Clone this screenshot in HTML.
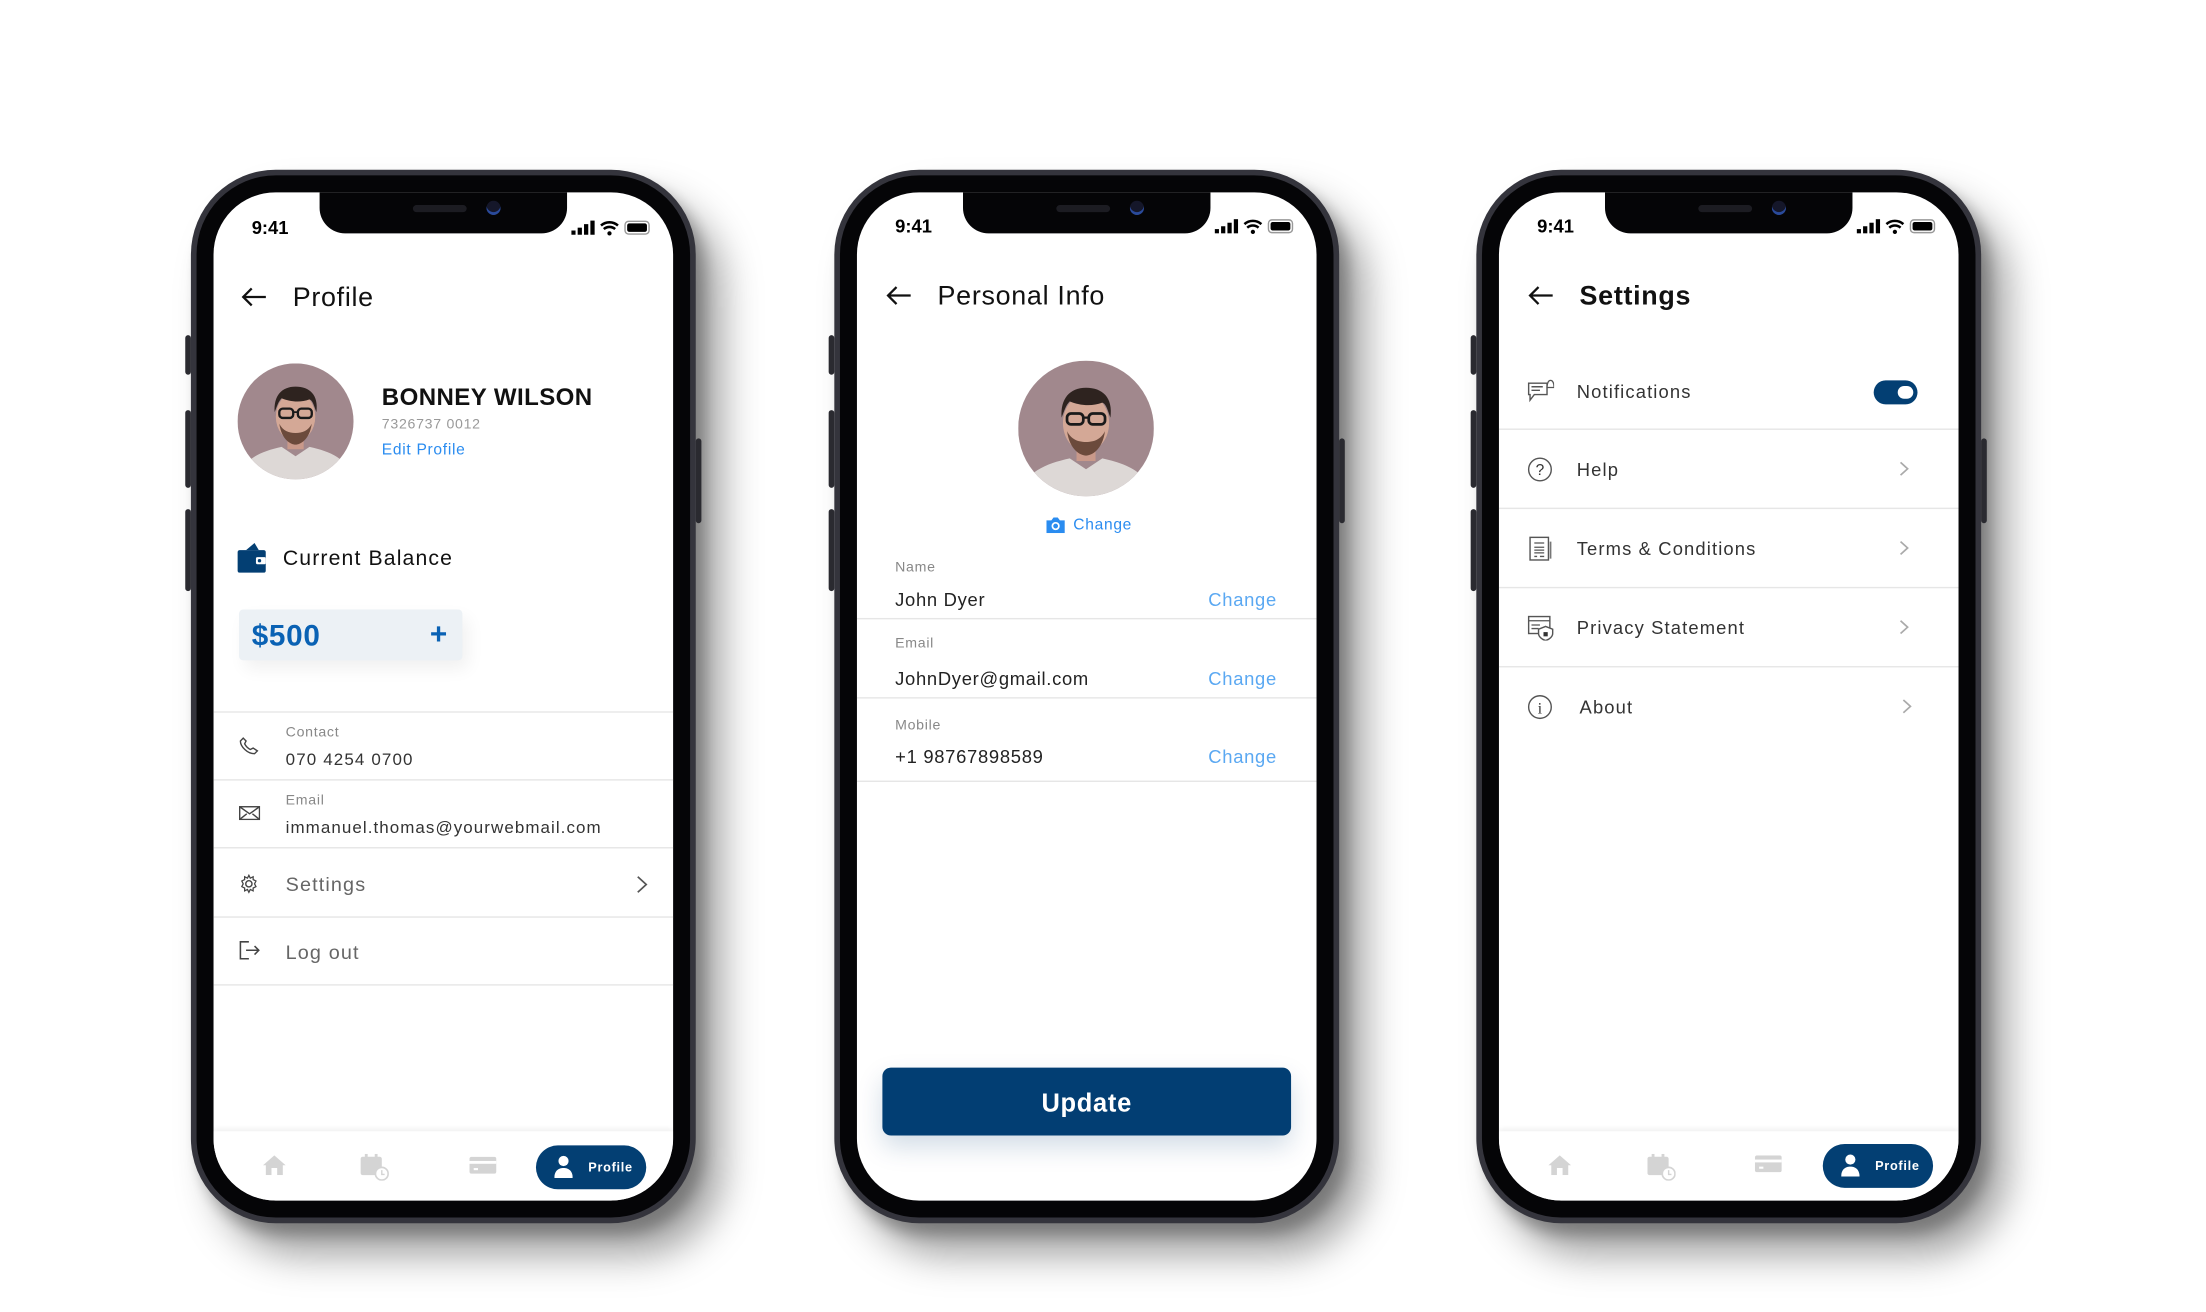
<!DOCTYPE html>
<html><head><meta charset="utf-8"><style>
*{margin:0;padding:0;box-sizing:border-box}
html,body{width:2206px;height:1312px;overflow:hidden;background:#fff;font-family:"Liberation Sans",sans-serif}
#w{position:absolute;left:0;top:0;width:1560px;height:928px;transform:scale(1.41410);transform-origin:0 0}
.ph{position:absolute;top:120px;width:357px;height:745px;border-radius:60px;background:#34343c;box-shadow:18px 22px 28px rgba(0,0,0,.38),6px 8px 10px rgba(0,0,0,.25)}
.bz{position:absolute;left:4px;top:4px;right:4px;bottom:4px;border-radius:56px;background:#050507}
.sc{position:absolute;left:16px;top:16px;width:325px;height:713px;border-radius:44px;background:#fff;overflow:hidden}
.btn{position:absolute;background:#2a2a30;border-radius:2px}
.notch{position:absolute;left:75px;top:0;width:175px;height:29px;background:#050507;border-radius:0 0 18px 18px}
.notch:before{content:"";position:absolute;left:66px;top:9px;width:38px;height:5px;border-radius:3px;background:#1c1c22}
.notch:after{content:"";position:absolute;left:118px;top:6px;width:10px;height:10px;border-radius:50%;background:#15172a;box-shadow:inset 0 -2px 0 #2a4a9a}
.t{position:absolute;white-space:nowrap;transform:translateY(-50%);line-height:1;letter-spacing:.5px}
.time{left:27px;top:25px;font-weight:bold;font-size:13px;color:#000;letter-spacing:0}
.stat{position:absolute;right:14px;top:19px}
.dv{position:absolute;left:0;width:325px;height:1px;background:#e6e6e6}
.gl{font-size:10px;color:#888}
.nav{position:absolute;left:0;top:664px;width:325px;height:49px;background:#fff;box-shadow:0 -2px 3px rgba(0,0,0,.05)}
.pill{position:absolute;left:228px;top:10px;width:78px;height:31px;border-radius:16px;background:#033f73;color:#fff;font-size:9px;font-weight:bold}
.blue{color:#2a8cf0}
</style></head><body><div id="w">

<!-- PHONE 1 -->
<div class="ph" style="left:135px">
 <div class="btn" style="left:-4px;top:117px;width:4px;height:28px"></div>
 <div class="btn" style="left:-4px;top:170px;width:4px;height:55px"></div>
 <div class="btn" style="left:-4px;top:240px;width:4px;height:58px"></div>
 <div class="btn" style="right:-4px;top:190px;width:4px;height:60px"></div>
 <div class="bz"></div>
 <div class="sc">
  <div class="notch"></div>
  <div class="t time">9:41</div>
  <svg class="stat" width="58" height="12" viewBox="0 0 58 12"><rect x="0" y="8" width="3" height="3" fill="#000"/><rect x="4.5" y="6" width="3" height="5" fill="#000"/><rect x="9" y="3.5" width="3" height="7.5" fill="#000"/><rect x="13.5" y="1" width="3" height="10" fill="#000"/><path d="M21 4.5a9 9 0 0 1 12 0M23 7a6 6 0 0 1 8 0" stroke="#000" stroke-width="1.8" fill="none"/><circle cx="27" cy="10" r="1.5"/><rect x="38" y="1.5" width="17" height="9" rx="2.5" fill="none" stroke="#999" stroke-width="1"/><rect x="39.5" y="3" width="14" height="6" rx="1.5" fill="#000"/></svg>
  <svg style="position:absolute;left:19px;top:67px" width="19" height="14" viewBox="0 0 19 14"><path d="M18 7H2M8 1L2 7l6 6" stroke="#111" stroke-width="1.6" fill="none"/></svg>
  <div class="t" style="left:56px;top:75px;font-size:19px;color:#111">Profile</div>
  <svg style="position:absolute;left:17px;top:121px" width="82" height="82" viewBox="0 0 100 100"><defs><clipPath id="c1"><circle cx="50" cy="50" r="50"/></clipPath></defs><g clip-path="url(#c1)"><rect width="100" height="100" fill="#a1888d"/><path d="M0 100C5 82 20 76 38 72L50 80 62 72C80 76 95 82 100 100Z" fill="#ddd8d6"/><rect x="43" y="60" width="14" height="14" fill="#c9998a"/><ellipse cx="50" cy="46" rx="17" ry="21" fill="#d4a896"/><path d="M36 52c2 14 10 18 14 18s12-4 14-18c-3 6-8 8-14 8s-11-2-14-8z" fill="#6b4a3c"/><path d="M32 42c-1-14 6-22 18-22s20 7 18 22c-2-5-3-10-6-11-8 3-17 2-24-1-3 3-4 7-6 12z" fill="#2e231f"/><rect x="36" y="39" width="12" height="8" rx="3" fill="none" stroke="#1a1a1a" stroke-width="2"/><rect x="52" y="39" width="12" height="8" rx="3" fill="none" stroke="#1a1a1a" stroke-width="2"/><path d="M48 42h4" stroke="#1a1a1a" stroke-width="1.6"/></g></svg>
  <div class="t" style="left:119px;top:145px;font-size:17px;font-weight:bold;color:#111;letter-spacing:.3px">BONNEY WILSON</div>
  <div class="t" style="left:119px;top:165px;font-size:10px;color:#999">7326737 0012</div>
  <div class="t" style="left:119px;top:183px;font-size:11px;color:#2a8cf0">Edit Profile</div>
  <svg style="position:absolute;left:17px;top:248px" width="20" height="21" viewBox="0 0 20 21"><path d="M6 5L12 0l3 5z" fill="#033f73"/><rect x="0" y="5" width="20" height="16" rx="1.5" fill="#033f73"/><rect x="13" y="10" width="7" height="5" rx="1" fill="#fff"/><circle cx="15.5" cy="12.5" r="1.2" fill="#033f73"/></svg>
  <div class="t" style="left:49px;top:259px;font-size:15px;color:#111;letter-spacing:.8px">Current Balance</div>
  <div style="position:absolute;left:18px;top:295px;width:158px;height:36px;background:#ecf1f5;border-radius:3px;box-shadow:4px 6px 12px rgba(0,0,0,.06)"></div>
  <div class="t" style="left:27px;top:314px;font-size:21px;font-weight:bold;color:#0a62b4">$500</div>
  <div class="t" style="left:153px;top:313px;font-size:21px;font-weight:bold;color:#0a62b4">+</div>
  <div class="dv" style="top:367px"></div>
  <svg style="position:absolute;left:18px;top:385px" width="15" height="13" viewBox="0 0 15 13"><path d="M3 1L1 3c0 4 5 9 10 9l2-2-3-2-2 1C6 8 5 7 4 5l1-2z" fill="none" stroke="#444" stroke-width="1"/></svg>
  <div class="t gl" style="left:51px;top:383px">Contact</div>
  <div class="t" style="left:51px;top:401px;font-size:12px;color:#333;letter-spacing:.8px">070 4254 0700</div>
  <div class="dv" style="top:415px"></div>
  <svg style="position:absolute;left:18px;top:434px" width="15" height="10" viewBox="0 0 15 10"><rect x=".5" y=".5" width="14" height="9" fill="none" stroke="#444"/><path d="M.5.5l7 5 7-5M.5 9.5l5-4M14.5 9.5l-5-4" fill="none" stroke="#444"/></svg>
  <div class="t gl" style="left:51px;top:431px">Email</div>
  <div class="t" style="left:51px;top:449px;font-size:12px;color:#333;letter-spacing:.75px">immanuel.thomas@yourwebmail.com</div>
  <div class="dv" style="top:463px"></div>
  <svg style="position:absolute;left:18px;top:482px" width="14" height="14" viewBox="0 0 14 14"><circle cx="7" cy="7" r="2.2" fill="none" stroke="#444"/><path d="M7 1l1 2 2-1 0 2 2 1-1 2 1 2-2 1 0 2-2-1-1 2-1-2-2 1 0-2-2-1 1-2-1-2 2-1 0-2 2 1z" fill="none" stroke="#444" stroke-width=".9"/></svg>
  <div class="t" style="left:51px;top:489px;font-size:14px;color:#666;letter-spacing:.8px">Settings</div>
  <svg style="position:absolute;left:299px;top:483px" width="8" height="13" viewBox="0 0 8 13"><path d="M1 1l6 5.5L1 12" fill="none" stroke="#555" stroke-width="1.2"/></svg>
  <div class="dv" style="top:512px"></div>
  <svg style="position:absolute;left:18px;top:529px" width="15" height="14" viewBox="0 0 15 14"><path d="M7 1H1v12h6M5 7h9M11 4l3 3-3 3" fill="none" stroke="#444" stroke-width="1.1"/></svg>
  <div class="t" style="left:51px;top:537px;font-size:14px;color:#666;letter-spacing:.8px">Log out</div>
  <div class="dv" style="top:560px"></div>
  <div class="nav">
   <svg style="position:absolute;left:35px;top:17px" width="16" height="14" viewBox="0 0 16 14"><path d="M8 0L0 7h2v7h4V9h4v5h4V7h2z" fill="#d4d4d4"/></svg>
   <svg style="position:absolute;left:104px;top:16px" width="20" height="19" viewBox="0 0 20 19"><rect x="0" y="2" width="15" height="13" rx="1.5" fill="#d4d4d4"/><rect x="3" y="0" width="2" height="4" fill="#d4d4d4"/><rect x="10" y="0" width="2" height="4" fill="#d4d4d4"/><circle cx="15" cy="14" r="4.5" fill="#fff" stroke="#d4d4d4" stroke-width="1.2"/><path d="M15 11.5v3h2" stroke="#d4d4d4" fill="none"/></svg>
   <svg style="position:absolute;left:181px;top:18px" width="19" height="12" viewBox="0 0 19 12"><rect width="19" height="12" rx="1.5" fill="#d4d4d4"/><rect y="3" width="19" height="2" fill="#fff"/><rect x="3" y="8" width="3" height="1.5" fill="#fff"/></svg>
   <div class="pill"><svg style="position:absolute;left:13px;top:7px" width="13" height="16" viewBox="0 0 13 16"><circle cx="6.5" cy="4" r="3.6" fill="#fff"/><path d="M0 16c0-5 3-7 6.5-7S13 11 13 16z" fill="#fff"/></svg><span class="t" style="left:37px;top:16px">Profile</span></div>
  </div>
 </div>
</div>

<!-- PHONE 2 -->
<div class="ph" style="left:590px">
 <div class="btn" style="left:-4px;top:117px;width:4px;height:28px"></div>
 <div class="btn" style="left:-4px;top:170px;width:4px;height:55px"></div>
 <div class="btn" style="left:-4px;top:240px;width:4px;height:58px"></div>
 <div class="btn" style="right:-4px;top:190px;width:4px;height:60px"></div>
 <div class="bz"></div>
 <div class="sc">
  <div class="notch"></div>
  <div class="t time" style="top:24px">9:41</div>
  <svg class="stat" style="top:18px" width="58" height="12" viewBox="0 0 58 12"><rect x="0" y="8" width="3" height="3" fill="#000"/><rect x="4.5" y="6" width="3" height="5" fill="#000"/><rect x="9" y="3.5" width="3" height="7.5" fill="#000"/><rect x="13.5" y="1" width="3" height="10" fill="#000"/><path d="M21 4.5a9 9 0 0 1 12 0M23 7a6 6 0 0 1 8 0" stroke="#000" stroke-width="1.8" fill="none"/><circle cx="27" cy="10" r="1.5"/><rect x="38" y="1.5" width="17" height="9" rx="2.5" fill="none" stroke="#999" stroke-width="1"/><rect x="39.5" y="3" width="14" height="6" rx="1.5" fill="#000"/></svg>
  <svg style="position:absolute;left:20px;top:66px" width="19" height="14" viewBox="0 0 19 14"><path d="M18 7H2M8 1L2 7l6 6" stroke="#111" stroke-width="1.6" fill="none"/></svg>
  <div class="t" style="left:57px;top:74px;font-size:19px;color:#111">Personal Info</div>
  <svg style="position:absolute;left:114px;top:119px" width="96" height="96" viewBox="0 0 100 100"><defs><clipPath id="c2"><circle cx="50" cy="50" r="50"/></clipPath></defs><g clip-path="url(#c2)"><rect width="100" height="100" fill="#a1888d"/><path d="M0 100C5 82 20 76 38 72L50 80 62 72C80 76 95 82 100 100Z" fill="#ddd8d6"/><rect x="43" y="60" width="14" height="14" fill="#c9998a"/><ellipse cx="50" cy="46" rx="17" ry="21" fill="#d4a896"/><path d="M36 52c2 14 10 18 14 18s12-4 14-18c-3 6-8 8-14 8s-11-2-14-8z" fill="#6b4a3c"/><path d="M32 42c-1-14 6-22 18-22s20 7 18 22c-2-5-3-10-6-11-8 3-17 2-24-1-3 3-4 7-6 12z" fill="#2e231f"/><rect x="36" y="39" width="12" height="8" rx="3" fill="none" stroke="#1a1a1a" stroke-width="2"/><rect x="52" y="39" width="12" height="8" rx="3" fill="none" stroke="#1a1a1a" stroke-width="2"/><path d="M48 42h4" stroke="#1a1a1a" stroke-width="1.6"/></g></svg>
  <svg style="position:absolute;left:134px;top:230px" width="13" height="11" viewBox="0 0 13 11"><path d="M0 2h3.5L5 0h3l1.5 2H13v9H0z" fill="#2a8cf0"/><circle cx="6.5" cy="6" r="2.3" fill="none" stroke="#fff" stroke-width="1.2"/></svg>
  <div class="t blue" style="left:153px;top:236px;font-size:11px">Change</div>
  <div class="t gl" style="left:27px;top:266px">Name</div>
  <div class="t" style="left:27px;top:288px;font-size:13px;color:#222">John Dyer</div>
  <div class="t" style="right:28px;top:288px;font-size:13px;color:#5aa8f2">Change</div>
  <div class="dv" style="top:301px"></div>
  <div class="t gl" style="left:27px;top:320px">Email</div>
  <div class="t" style="left:27px;top:344px;font-size:13px;color:#222">JohnDyer@gmail.com</div>
  <div class="t" style="right:28px;top:344px;font-size:13px;color:#5aa8f2">Change</div>
  <div class="dv" style="top:357px"></div>
  <div class="t gl" style="left:27px;top:378px">Mobile</div>
  <div class="t" style="left:27px;top:399px;font-size:13px;color:#222">+1 98767898589</div>
  <div class="t" style="right:28px;top:399px;font-size:13px;color:#5aa8f2">Change</div>
  <div class="dv" style="top:416px"></div>
  <div style="position:absolute;left:18px;top:619px;width:289px;height:48px;border-radius:6px;background:#023e73;box-shadow:0 8px 18px rgba(2,62,115,.18)"></div>
  <div class="t" style="left:0;width:325px;text-align:center;top:644px;font-size:18px;font-weight:bold;color:#fff">Update</div>
 </div>
</div>

<!-- PHONE 3 -->
<div class="ph" style="left:1044px">
 <div class="btn" style="left:-4px;top:117px;width:4px;height:28px"></div>
 <div class="btn" style="left:-4px;top:170px;width:4px;height:55px"></div>
 <div class="btn" style="left:-4px;top:240px;width:4px;height:58px"></div>
 <div class="btn" style="right:-4px;top:190px;width:4px;height:60px"></div>
 <div class="bz"></div>
 <div class="sc">
  <div class="notch"></div>
  <div class="t time" style="top:24px">9:41</div>
  <svg class="stat" style="top:18px" width="58" height="12" viewBox="0 0 58 12"><rect x="0" y="8" width="3" height="3" fill="#000"/><rect x="4.5" y="6" width="3" height="5" fill="#000"/><rect x="9" y="3.5" width="3" height="7.5" fill="#000"/><rect x="13.5" y="1" width="3" height="10" fill="#000"/><path d="M21 4.5a9 9 0 0 1 12 0M23 7a6 6 0 0 1 8 0" stroke="#000" stroke-width="1.8" fill="none"/><circle cx="27" cy="10" r="1.5"/><rect x="38" y="1.5" width="17" height="9" rx="2.5" fill="none" stroke="#999" stroke-width="1"/><rect x="39.5" y="3" width="14" height="6" rx="1.5" fill="#000"/></svg>
  <svg style="position:absolute;left:20px;top:66px" width="19" height="14" viewBox="0 0 19 14"><path d="M18 7H2M8 1L2 7l6 6" stroke="#111" stroke-width="1.6" fill="none"/></svg>
  <div class="t" style="left:57px;top:74px;font-size:19px;font-weight:bold;color:#111">Settings</div>

  <svg style="position:absolute;left:20px;top:132px" width="19" height="17" viewBox="0 0 19 17"><path d="M1 3h13v8H5l-3 4v-4H1z" fill="none" stroke="#555" stroke-width="1"/><path d="M3 5.5h8M3 8h6" stroke="#555"/><path d="M14 6c0-3 1-5 2.5-5S19 3 19 6z" fill="#fff" stroke="#555" stroke-width=".9"/></svg>
  <div class="t" style="left:55px;top:141px;font-size:13px;color:#333;letter-spacing:.8px">Notifications</div>
  <div style="position:absolute;left:265px;top:133px;width:31px;height:17px;border-radius:9px;background:#033f73"></div>
  <div style="position:absolute;left:282px;top:137px;width:11px;height:9px;border-radius:5px;background:#fff"></div>
  <div class="dv" style="top:167px"></div>

  <svg style="position:absolute;left:20px;top:187px" width="18" height="18" viewBox="0 0 18 18"><circle cx="9" cy="9" r="8" fill="none" stroke="#555"/><text x="9" y="13" text-anchor="middle" font-size="11" font-family="Liberation Sans" fill="#333">?</text></svg>
  <div class="t" style="left:55px;top:196px;font-size:13px;color:#333;letter-spacing:.8px">Help</div>
  <svg style="position:absolute;left:283px;top:190px" width="7" height="11" viewBox="0 0 7 11"><path d="M1 1l5 4.5L1 10" fill="none" stroke="#aaa" stroke-width="1.2"/></svg>
  <div class="dv" style="top:223px"></div>

  <svg style="position:absolute;left:20px;top:243px" width="18" height="18" viewBox="0 0 18 18"><rect x="2" y="1" width="13" height="16" fill="none" stroke="#555"/><path d="M5 5h7M5 8h7M5 10h7M5 12h7M5 14.5h2M9 14.5h3" stroke="#555" stroke-width=".9"/><path d="M16.5 4v12" stroke="#777" stroke-width="1.2"/></svg>
  <div class="t" style="left:55px;top:252px;font-size:13px;color:#333;letter-spacing:.8px">Terms &amp; Conditions</div>
  <svg style="position:absolute;left:283px;top:246px" width="7" height="11" viewBox="0 0 7 11"><path d="M1 1l5 4.5L1 10" fill="none" stroke="#aaa" stroke-width="1.2"/></svg>
  <div class="dv" style="top:279px"></div>

  <svg style="position:absolute;left:20px;top:299px" width="19" height="18" viewBox="0 0 19 18"><rect x="1" y="1" width="15" height="12" fill="none" stroke="#555"/><path d="M1 4h15M3 7h6M3 9.5h5" stroke="#555" stroke-width=".9"/><path d="M13 8l5 2v3c0 2-2 4-5 5-3-1-5-3-5-5v-3z" fill="#fff" stroke="#555"/><rect x="11.5" y="12" width="3" height="3" fill="#333"/></svg>
  <div class="t" style="left:55px;top:308px;font-size:13px;color:#333;letter-spacing:.8px">Privacy Statement</div>
  <svg style="position:absolute;left:283px;top:302px" width="7" height="11" viewBox="0 0 7 11"><path d="M1 1l5 4.5L1 10" fill="none" stroke="#aaa" stroke-width="1.2"/></svg>
  <div class="dv" style="top:335px"></div>

  <svg style="position:absolute;left:20px;top:355px" width="18" height="18" viewBox="0 0 18 18"><circle cx="9" cy="9" r="8" fill="none" stroke="#555"/><text x="9" y="13.5" text-anchor="middle" font-size="11" font-family="Liberation Serif" fill="#333">i</text></svg>
  <div class="t" style="left:57px;top:364px;font-size:13px;color:#333;letter-spacing:.8px">About</div>
  <svg style="position:absolute;left:285px;top:358px" width="7" height="11" viewBox="0 0 7 11"><path d="M1 1l5 4.5L1 10" fill="none" stroke="#aaa" stroke-width="1.2"/></svg>

  <div class="nav">
   <svg style="position:absolute;left:35px;top:17px" width="16" height="14" viewBox="0 0 16 14"><path d="M8 0L0 7h2v7h4V9h4v5h4V7h2z" fill="#d4d4d4"/></svg>
   <svg style="position:absolute;left:105px;top:16px" width="20" height="19" viewBox="0 0 20 19"><rect x="0" y="2" width="15" height="13" rx="1.5" fill="#d4d4d4"/><rect x="3" y="0" width="2" height="4" fill="#d4d4d4"/><rect x="10" y="0" width="2" height="4" fill="#d4d4d4"/><circle cx="15" cy="14" r="4.5" fill="#fff" stroke="#d4d4d4" stroke-width="1.2"/><path d="M15 11.5v3h2" stroke="#d4d4d4" fill="none"/></svg>
   <svg style="position:absolute;left:181px;top:17px" width="19" height="12" viewBox="0 0 19 12"><rect width="19" height="12" rx="1.5" fill="#d4d4d4"/><rect y="3" width="19" height="2" fill="#fff"/><rect x="3" y="8" width="3" height="1.5" fill="#fff"/></svg>
   <div class="pill" style="left:229px;top:9px"><svg style="position:absolute;left:13px;top:7px" width="13" height="16" viewBox="0 0 13 16"><circle cx="6.5" cy="4" r="3.6" fill="#fff"/><path d="M0 16c0-5 3-7 6.5-7S13 11 13 16z" fill="#fff"/></svg><span class="t" style="left:37px;top:16px">Profile</span></div>
  </div>
 </div>
</div>

</div></body></html>
